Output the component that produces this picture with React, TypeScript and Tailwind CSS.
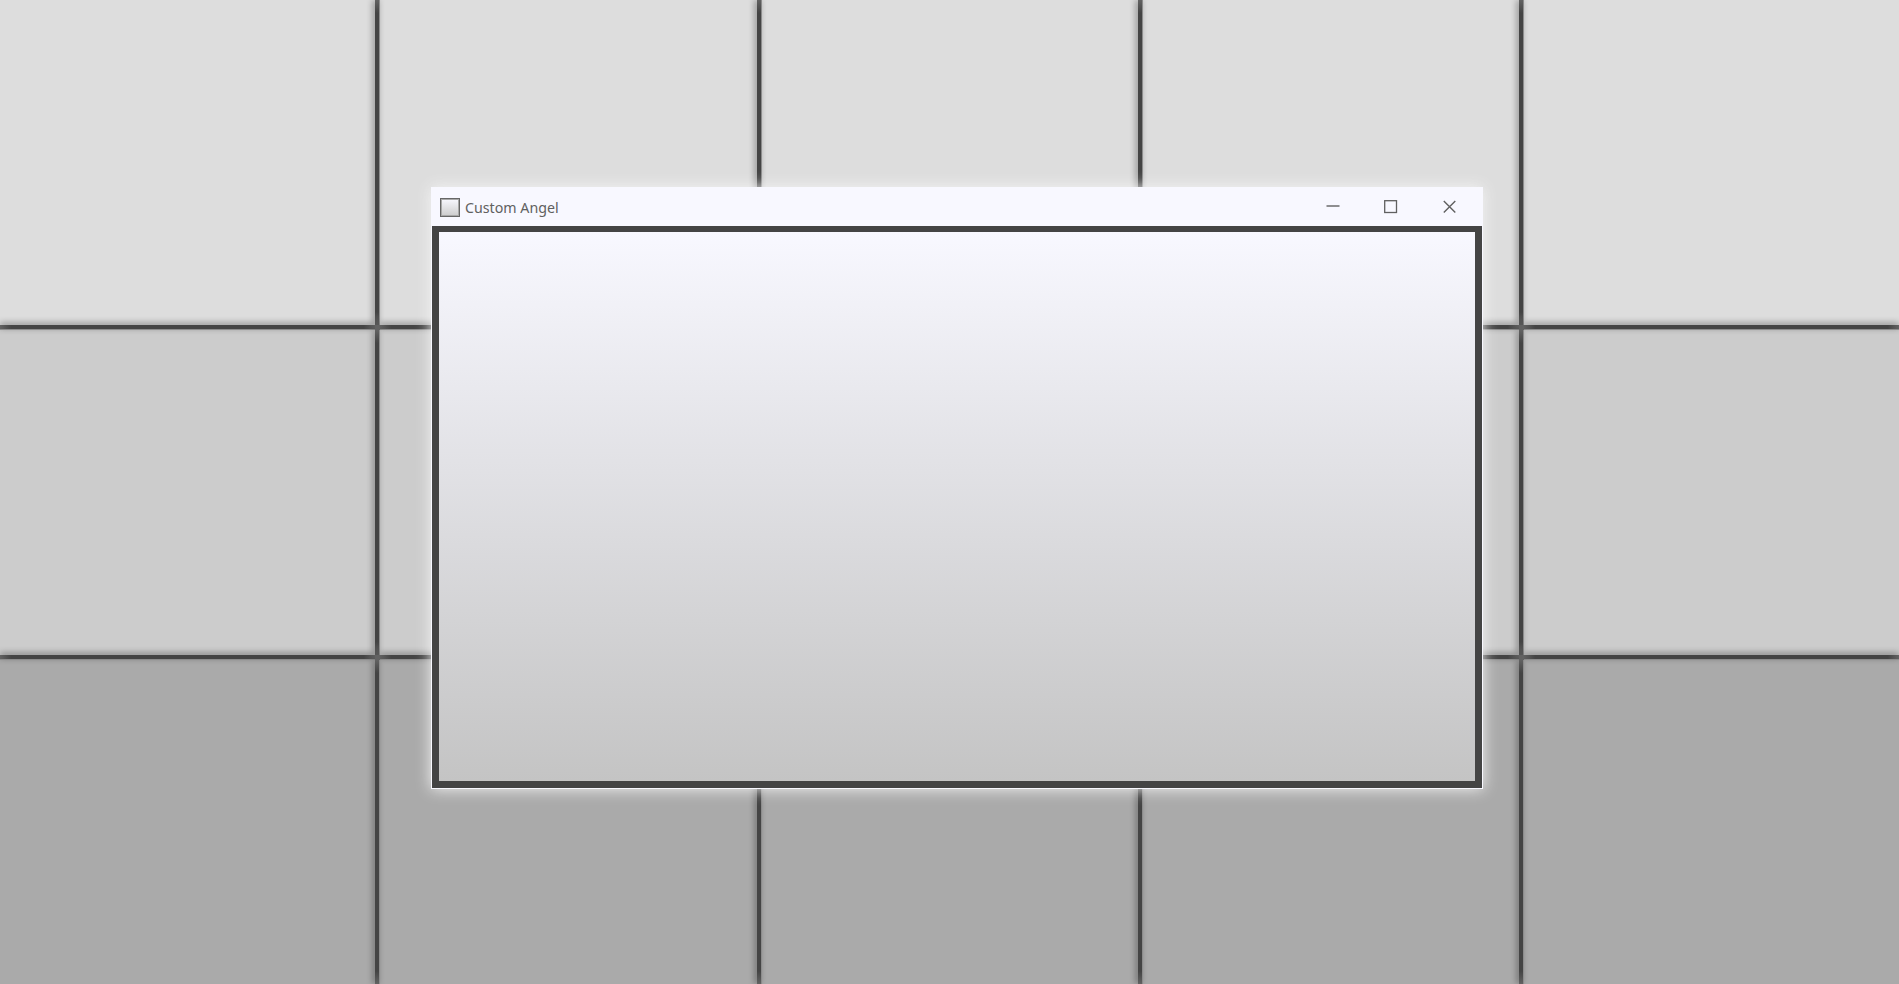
const rows = ["bg-[#dddddd]", "bg-[#cccccc]", "bg-[#aaaaaa]"];

const verticalBar =
  "z-10 border-r border-[#8c8c8c] bg-[linear-gradient(to_bottom,#626262,#444444_4%,#444444_96%,#626262)] shadow-[-2px_0_6px_#00000060]";
const horizontalBar =
  "z-10 border-b border-[#8c8c8c] bg-[linear-gradient(to_right,#626262,#444444_3%,#444444_97%,#626262)] shadow-[0_-2px_6px_#00000060]";

function Wall() {
  const cells = [];
  for (let r = 0; r < 5; r++) {
    for (let c = 0; c < 9; c++) {
      const key = `${r}-${c}`;
      if (r % 2 === 0 && c % 2 === 0) {
        cells.push(<div key={key} className={rows[r / 2]} />);
      } else if (r % 2 === 0) {
        cells.push(<div key={key} className={verticalBar} />);
      } else if (c % 2 === 0) {
        cells.push(<div key={key} className={horizontalBar} />);
      } else {
        cells.push(<div key={key} className="z-20 bg-[#626262]" />);
      }
    }
  }
  return (
    <div className="grid h-full grid-cols-[375px_5px_377px_5px_376px_5px_376px_5px_1fr] grid-rows-[325px_5px_325px_5px_1fr]">
      {cells}
    </div>
  );
}

function Controls() {
  return (
    <div className="mr-[25px] ml-auto flex items-center text-[#606060]">
      <svg className="mr-[42px]" width="15" height="15" viewBox="0 0 15 15" fill="none" stroke="currentColor">
        <path d="M.5 7h13" strokeWidth="1.4" />
      </svg>
      <svg className="mr-[44px]" width="15" height="15" viewBox="0 0 15 15" fill="none" stroke="currentColor">
        <rect x="1.7" y="1.7" width="11.8" height="11.8" strokeWidth="1.3" />
      </svg>
      <svg width="15" height="15" viewBox="0 0 15 15" fill="none" stroke="currentColor">
        <path d="M1.8 2l11.5 11.5M13.3 2L1.8 13.5" strokeWidth="1.4" />
      </svg>
    </div>
  );
}

export default function App() {
  return (
    <div className="relative h-[984px] w-[1899px] overflow-hidden bg-[#444444]">
      <Wall />
      <section className="absolute top-[187px] left-[431px] z-30 flex h-[602px] w-[1052px] flex-col bg-[#f8f8ff] px-px pb-px shadow-[0_0_14px_#f5f5f5]">
        <header className="flex h-[39px] items-center pl-[8px]">
          <span className="mt-[2px] h-[19px] w-[20px] border border-[#666666] bg-linear-to-b from-[#f8f8ff] to-[#cccccc] shadow-[inset_0_0_0_1px_#a8a8a8]" />
          <h1 className="mt-[2px] ml-[5px] w-[110px] origin-left scale-x-[0.948] font-['Noto_Sans',sans-serif] text-[15px] leading-none whitespace-nowrap text-[#606060]">
            Custom Angel
          </h1>
          <Controls />
        </header>
        <main className="flex-1 border-x-[7px] border-t-[6px] border-b-[7px] border-[#444444] bg-linear-to-b from-[#f8f8ff] to-[#c4c4c4]" />
      </section>
    </div>
  );
}
